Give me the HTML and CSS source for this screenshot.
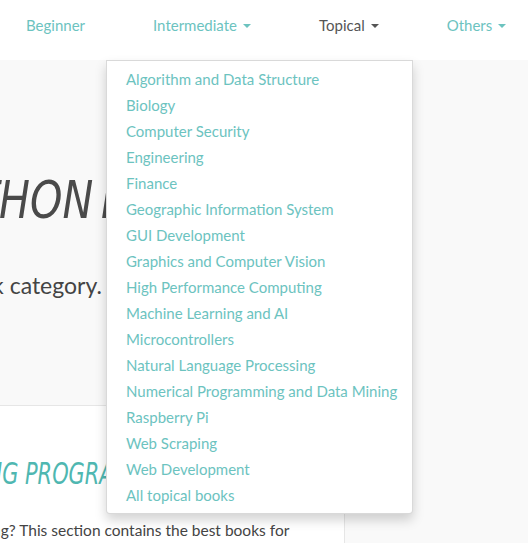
FILE: index.html
```html
<!DOCTYPE html>
<html>
<head>
<meta charset="utf-8">
<link rel="stylesheet" href="styles.css">
</head>
<body>
<div class="page">
  <nav class="nav">
    <a class="nav-item">Beginner</a>
    <a class="nav-item">Intermediate<span class="caret"></span></a>
    <a class="nav-item active">Topical<span class="caret"></span></a>
    <a class="nav-item">Others<span class="caret"></span></a>
    <ul class="dropdown">
      <li><a>Algorithm and Data Structure</a></li>
      <li><a>Biology</a></li>
      <li><a>Computer Security</a></li>
      <li><a>Engineering</a></li>
      <li><a>Finance</a></li>
      <li><a>Geographic Information System</a></li>
      <li><a>GUI Development</a></li>
      <li><a>Graphics and Computer Vision</a></li>
      <li><a>High Performance Computing</a></li>
      <li><a>Machine Learning and AI</a></li>
      <li><a>Microcontrollers</a></li>
      <li><a>Natural Language Processing</a></li>
      <li><a>Numerical Programming and Data Mining</a></li>
      <li><a>Raspberry Pi</a></li>
      <li><a>Web Scraping</a></li>
      <li><a>Web Development</a></li>
      <li><a>All topical books</a></li>
    </ul>
  </nav>
  <header class="hero">
    <h1 class="hero-title">PYTHON BOOKS</h1>
    <p class="hero-sub">Pick a book category.</p>
  </header>
  <section class="card">
    <h2 class="card-title">LEARNING PROGRAMMING</h2>
    <p class="card-text">New to programming? This section contains the best books for</p>
  </section>
</div>
</body>
</html>
```
FILE: styles.css
```css
html, body {
  margin: 0;
  padding: 0;
}
body {
  background: #f9f9f9;
  font-family: "Lato", "Open Sans", sans-serif;
  overflow: hidden;
  width: 528px;
  height: 543px;
}
.page {
  position: relative;
}
.nav {
  position: relative;
  height: 60px;
  background: #ffffff;
  display: flex;
  align-items: center;
  gap: 68px;
  padding-left: 26px;
  box-sizing: border-box;
  font-size: 15px;
}
.nav-item {
  color: #6cc3bf;
  white-space: nowrap;
  display: flex;
  align-items: center;
  padding-bottom: 10px;
}
.nav-item.active {
  color: #555555;
}
.caret {
  display: inline-block;
  width: 0;
  height: 0;
  margin-left: 6px;
  margin-top: 2px;
  border-top: 4px solid currentColor;
  border-left: 4px solid transparent;
  border-right: 4px solid transparent;
}
.dropdown {
  position: absolute;
  left: 106px;
  top: 60px;
  width: 307px;
  margin: 0;
  padding: 5px 0;
  list-style: none;
  background: #ffffff;
  border: 1px solid rgba(0, 0, 0, 0.15);
  border-radius: 0 0 4px 4px;
  box-shadow: 0 6px 12px rgba(0, 0, 0, 0.175);
  box-sizing: border-box;
  z-index: 10;
}
.dropdown a {
  display: block;
  padding: 3px 19px;
  line-height: 20px;
  font-size: 15px;
  color: #6cc3bf;
  white-space: nowrap;
}
.hero {
  height: 345px;
  padding-top: 1px;
  box-sizing: border-box;
}
.hero-title {
  margin: 109px 0 0 -76px;
  white-space: nowrap;
  font-family: "DejaVu Sans Condensed", "DejaVu Sans", sans-serif;
  font-style: italic;
  font-weight: normal;
  font-size: 52px;
  line-height: 60px;
  color: #4a4a4a;
  letter-spacing: 0;
  word-spacing: -6px;
  transform: scaleX(0.88);
  transform-origin: left center;
}
.hero-sub {
  margin: 41px 0 0 -112px;
  white-space: nowrap;
  font-size: 23px;
  color: #444444;
}
.card {
  width: 345px;
  height: 140px;
  background: #ffffff;
  border-top: 1px solid #e6e6e6;
  border-right: 1px solid #e6e6e6;
  box-sizing: border-box;
  padding-top: 50px;
}
.card-title {
  margin: 0 0 0 -89px;
  white-space: nowrap;
  font-family: "DejaVu Sans Condensed", "DejaVu Sans", sans-serif;
  font-style: italic;
  font-weight: normal;
  font-size: 31px;
  line-height: 34px;
  color: #4fb7b1;
  letter-spacing: 0;
  transform: scaleX(0.75);
  transform-origin: left center;
}
.card-text {
  margin: 31px 0 0 -135px;
  white-space: nowrap;
  font-size: 15.5px;
  color: #444444;
}
```
